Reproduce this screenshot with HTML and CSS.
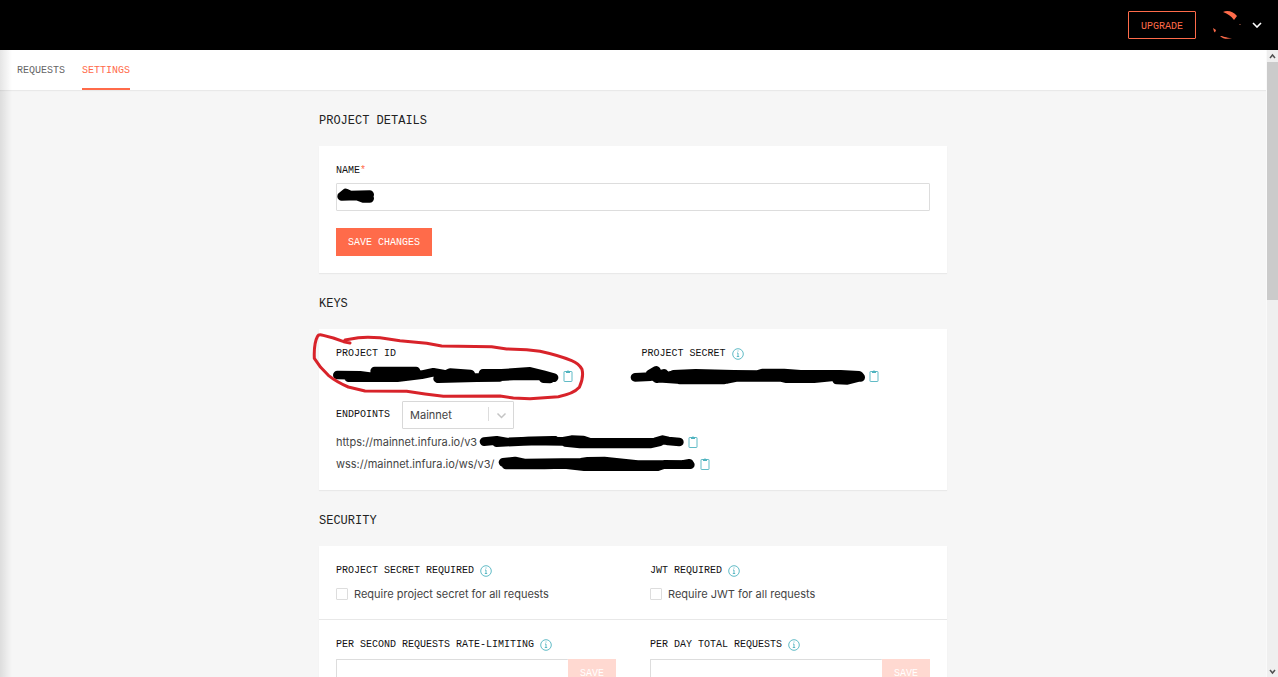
FILE: index.html
```html
<!DOCTYPE html>
<html lang="en">
<head>
    <meta charset="UTF-8">
    <meta name="viewport" content="width=device-width, initial-scale=1.0">
    <title>Project Settings</title>
    <link rel="stylesheet" href="styles.css">
</head>
<body>
    <!-- Shared icons -->
    <svg class="sprite" aria-hidden="true">
        <symbol id="clipboard" viewBox="0 0 10 12">
            <rect x="1" y="1.500" width="8" height="10" rx="0.500" fill="none" stroke="currentColor" stroke-width="0.900"/>
            <path d="M3 3V1h1.200q.8-1.400 1.600 0H7v2z" fill="currentColor"/>
        </symbol>
        <symbol id="info" viewBox="0 0 12 12">
            <circle cx="6" cy="6" r="5.300" fill="none" stroke="currentColor" stroke-width="0.900"/>
            <path d="M5 5h1v3.500M4.800 8.500h2.400M5.500 3h1" fill="none" stroke="currentColor" stroke-width="0.900"/>
        </symbol>
    </svg>

    <!-- Header -->
    <header class="header">
        <a href="#upgrade" class="btn-outline">UPGRADE</a>
        <button class="account" aria-label="Account">
            <svg class="avatar" viewBox="0 0 28 28">
                <path d="M10 1C14-1 20 0 24 5l-3 4c-3-4-6-6-11-8z" fill="#ff6b4a"/>
                <path d="M0 17l3 2-1 2.500-1-1z" fill="#ff6b4a"/>
                <path d="M7 25c4 0 5 2 12 2-4 1.500-9 1-12-2z" fill="#ff6b4a"/>
                <path d="M26.500 13h1v1h-1z" fill="#b9664f"/>
            </svg>
            <svg class="caret" viewBox="0 0 10 6"><path d="M1 1l4 4 4-4" fill="none" stroke="#fff" stroke-width="1.600"/></svg>
        </button>
    </header>

    <div class="page">
        <div class="content">
            <nav class="tabs">
                <a href="#requests">REQUESTS</a>
                <a href="#settings" class="active">SETTINGS</a>
            </nav>

            <main class="container">
                <section>
                    <h2>PROJECT DETAILS</h2>
                    <form class="card details">
                        <label class="label" for="name">NAME<span class="required">*</span></label>
                        <div class="field">
                            <input type="text" id="name">
                            <svg class="scribble" viewBox="78 249 114 84"><path d="M95 289L107 279 120 285 179 284M95 289L140 288 160 295 179 295"/></svg>
                        </div>
                        <button type="button" class="btn">SAVE CHANGES</button>
                    </form>
                </section>

                <section>
                    <h2>KEYS</h2>
                    <div class="card keys">
                        <div class="key-row">
                            <div>
                                <div class="label">PROJECT ID</div>
                                <div class="value">
                                    <svg class="redacted key" viewBox="108 234 666 48"><path d="M112 255L180 256 225 262M224 243H348M146 263L292 263 365 254 400 247 430 252M413 266L450 248 512 252M415 266L530 263 600 262M549 250L605 250 690 244 730 254 762 263M560 262L640 258 730 258M730 266L750 267"/></svg>
                                    <button class="copy" aria-label="Copy project ID"><svg><use href="#clipboard"/></svg></button>
                                </div>
                            </div>
                            <div>
                                <div class="label">PROJECT SECRET <svg class="info"><use href="#info"/></svg></div>
                                <div class="value">
                                    <svg class="redacted key" viewBox="124 144 666 48"><path d="M103 172L150 170 190 160M148 162L167 151M168 176L215 165M218 163L285 160 400 163 470 164 485 159 550 159 600 163 720 163 775 166 780 172M165 174L230 178 380 178 410 172 540 172 555 176 640 176 700 170M237 180H370M230 170H720M708 180L740 181 775 172"/></svg>
                                    <button class="copy" aria-label="Copy project secret"><svg><use href="#clipboard"/></svg></button>
                                </div>
                            </div>
                        </div>
                        <div class="endpoints">
                            <label for="network">ENDPOINTS</label>
                            <div class="select">
                                <select id="network"><option>Mainnet</option></select>
                                <svg viewBox="0 0 26 28"><path d="M.5 6v14" stroke="#ddd"/><path d="M9.500 12.500l4 4 4-4" fill="none" stroke="#c4c4c4" stroke-width="1.500"/></svg>
                            </div>
                        </div>
                        <div class="url">
                            <span>https://mainnet.infura.io/v3</span>
                            <svg class="redacted https" viewBox="510 123 609 66"><path d="M522 155L560 151 590 156 655 153 760 154 785 149 820 150 840 157 1035 156 1058 149 1075 153 1108 156M560 158L640 154 735 151M765 157L810 162 1020 162 1050 155"/></svg>
                            <button class="copy" aria-label="Copy https endpoint"><svg><use href="#clipboard"/></svg></button>
                        </div>
                        <div class="url">
                            <span>wss://mainnet.infura.io/ws/v3/</span>
                            <svg class="redacted wss" viewBox="561 189 591 66"><path d="M576 217L612 213 640 219 810 217 830 214 880 213 980 224 1110 224 1135 220M585 225L700 225 760 223 820 230 1040 230 1060 223 1138 224M590 220H900"/></svg>
                            <button class="copy" aria-label="Copy wss endpoint"><svg><use href="#clipboard"/></svg></button>
                        </div>
                        <!-- Hand-drawn circle round the project ID -->
                        <svg class="circle" viewBox="57 117 810 210"><path d="M150 159L131 155 100 144 70 136Q56 132 53 138 41 160 43 205L62 232 85 256Q110 276 145 291L195 303 320 304 375 312 430 319 600 318 640 324 690 326 775 320Q820 312 838 292 852 262 846 238 836 220 815 212 775 196 720 184L680 179 620 177 575 170 425 168 380 160 300 152 240 143Q200 140 175 143L135 150"/></svg>
                    </div>
                </section>

                <section>
                    <h2>SECURITY</h2>
                    <div class="card security">
                        <div class="cell">
                            <div class="label">PROJECT SECRET REQUIRED <svg class="info"><use href="#info"/></svg></div>
                            <label class="check"><input type="checkbox"> Require project secret for all requests</label>
                        </div>
                        <div class="cell">
                            <div class="label">JWT REQUIRED <svg class="info"><use href="#info"/></svg></div>
                            <label class="check"><input type="checkbox"> Require JWT for all requests</label>
                        </div>
                        <div class="cell">
                            <label class="label" for="perSecond">PER SECOND REQUESTS RATE-LIMITING <svg class="info"><use href="#info"/></svg></label>
                            <div class="limit">
                                <input type="text" id="perSecond">
                                <button class="btn" disabled>SAVE</button>
                            </div>
                        </div>
                        <div class="cell">
                            <label class="label" for="perDay">PER DAY TOTAL REQUESTS <svg class="info"><use href="#info"/></svg></label>
                            <div class="limit">
                                <input type="text" id="perDay">
                                <button class="btn" disabled>SAVE</button>
                            </div>
                        </div>
                    </div>
                </section>
            </main>
        </div>

        <div class="scrollbar">
            <svg viewBox="0 0 11 12"><path d="M3 8l2.500-3L8 8" fill="none" stroke="#505050" stroke-width="1.500"/></svg>
            <div class="thumb"></div>
            <svg viewBox="0 0 11 12"><path d="M3 5l2.500 3L8 5" fill="none" stroke="#505050" stroke-width="1.500"/></svg>
        </div>
    </div>
</body>
</html>
```
FILE: styles.css
```css
* {
    box-sizing: border-box;
}

body {
    margin: 0;
    height: 100vh;
    display: flex;
    flex-direction: column;
    overflow: hidden;
    background: #f6f6f6;
    color: #444;
    font-family: Inter, sans-serif;
    font-size: 11px;
}

input,
select,
button {
    font: inherit;
    color: inherit;
    margin: 0;
}

button {
    padding: 0;
    border: none;
    background: none;
    cursor: pointer;
}

a {
    text-decoration: none;
}

svg {
    display: block;
    flex: none;
}

.sprite {
    display: none;
}

.header {
    flex: none;
    height: 50px;
    padding: 0 16px;
    display: flex;
    align-items: center;
    justify-content: flex-end;
    gap: 17px;
    background: #000;
}

.btn-outline,
.btn {
    height: 28px;
    padding: 2px 12px 0;
    font-family: "Liberation Mono", monospace;
    font-size: 10px;
    line-height: 26px;
}

.btn-outline {
    border: 1px solid #ff6b4a;
    border-radius: 1px;
    color: #ff6b4a;
}

.btn {
    background: #ff6b4a;
    color: #fff;
}

.btn:disabled {
    background: #ffd9d1;
    cursor: default;
}

.account {
    display: flex;
    align-items: center;
    gap: 11px;
}

.avatar {
    width: 28px;
    height: 28px;
}

.caret {
    width: 10px;
    height: 6px;
}

.page {
    flex: 1;
    min-height: 0;
    display: flex;
}

.content {
    flex: 1;
    position: relative;
    overflow: hidden;
}

/* soft shadow down the left edge */
.content::after {
    content: "";
    position: absolute;
    inset: 0 auto 0 0;
    width: 12px;
    background: linear-gradient(to right, rgba(0, 0, 0, 0.1), rgba(0, 0, 0, 0));
}

.tabs {
    height: 40px;
    padding: 0 17px;
    display: flex;
    gap: 17px;
    background: #fff;
    box-shadow: 0 1px 1px rgba(0, 0, 0, 0.05);
}

.tabs a {
    font-family: "Liberation Mono", monospace;
    font-size: 10px;
    line-height: 42px;
    color: #666;
}

.tabs a.active {
    color: #ff6b4a;
    box-shadow: inset 0 -2px #ff6b4a;
}

.container {
    max-width: 628px;
    margin: 0 auto;
    padding-top: 20px;
}

section {
    margin-bottom: 20px;
}

h2 {
    margin: 0 0 14px;
    font-family: "Liberation Mono", monospace;
    font-size: 12px;
    font-weight: normal;
    line-height: 22px;
    color: #222;
}

.card {
    position: relative;
    padding: 17px;
    background: #fff;
    box-shadow: 0 1px 1px rgba(0, 0, 0, 0.05);
}

.keys {
    padding-bottom: 15px;
}

.label,
.endpoints label {
    font-family: "Liberation Mono", monospace;
    font-size: 10px;
    line-height: 16px;
    color: #111;
}

.label {
    display: flex;
    align-items: center;
    gap: 6px;
    margin-bottom: 6px;
}

.details .label {
    gap: 0;
    margin-bottom: 4px;
}

.required {
    color: #ff6b4a;
}

.info {
    width: 12px;
    height: 12px;
    color: #4fb3bf;
}

.field {
    position: relative;
    margin-bottom: 17px;
}

input[type="text"] {
    display: block;
    width: 100%;
    height: 28px;
    padding: 0 8px;
    border: 1px solid #ddd;
    border-radius: 1px;
    background: #fff;
}

.scribble {
    position: absolute;
    top: 0;
    left: 0;
    width: 38px;
    height: 28px;
    pointer-events: none;
}

.scribble path,
.redacted path {
    fill: none;
    stroke: #000;
    stroke-width: 26;
    stroke-linecap: round;
    stroke-linejoin: round;
}

.key-row {
    display: grid;
    grid-template-columns: 1fr 1fr;
    gap: 17px;
    margin-bottom: 17px;
}

.value,
.url {
    display: flex;
    align-items: center;
}

.value {
    height: 16px;
}

.url {
    height: 22px;
}

.redacted {
    overflow: visible;
}

.redacted.key {
    width: 222px;
    height: 16px;
}

.url .redacted {
    margin-left: 3px;
}

.redacted.https {
    width: 203px;
    height: 22px;
}

.redacted.wss {
    width: 197px;
    height: 22px;
}

.copy {
    margin-left: 5px;
    color: #4fb3bf;
}

.copy svg {
    width: 10px;
    height: 12px;
}

.endpoints {
    display: flex;
    align-items: center;
    gap: 12px;
    margin-bottom: 2px;
}

.select {
    position: relative;
}

.select select {
    display: block;
    appearance: none;
    width: 112px;
    height: 28px;
    padding: 0 7px;
    border: 1px solid #d8d8d8;
    border-radius: 1px;
    background: #fff;
}

.select svg {
    position: absolute;
    top: 0;
    right: 0;
    width: 26px;
    height: 28px;
    pointer-events: none;
}

.circle {
    position: absolute;
    top: 0;
    left: 0;
    width: 270px;
    height: 70px;
    overflow: visible;
    pointer-events: none;
}

.circle path {
    fill: none;
    stroke: #d8232a;
    stroke-width: 9;
    stroke-linecap: round;
    stroke-linejoin: round;
}

.security {
    display: grid;
    grid-template-columns: 1fr 1fr;
    padding: 0;
}

.cell {
    padding: 17px;
}

.cell:nth-child(-n+2) {
    padding-bottom: 16px;
    border-bottom: 1px solid #e8e8e8;
}

.check {
    display: flex;
    align-items: center;
    gap: 6px;
    height: 18px;
}

.check input {
    appearance: none;
    width: 12px;
    height: 12px;
    border: 1px solid #ddd;
    border-radius: 1px;
    background: #fff;
}

.limit {
    display: flex;
}

.limit input[type="text"] {
    flex: 1;
    min-width: 0;
    border-right: none;
}

.scrollbar {
    flex: none;
    width: 12px;
    display: flex;
    flex-direction: column;
    border-left: 1px solid #fafafa;
    background: #efefef;
}

.scrollbar svg {
    width: 11px;
    height: 12px;
}

.thumb {
    height: 38%;
    margin-bottom: auto;
    background: #cbcbcb;
}
```
